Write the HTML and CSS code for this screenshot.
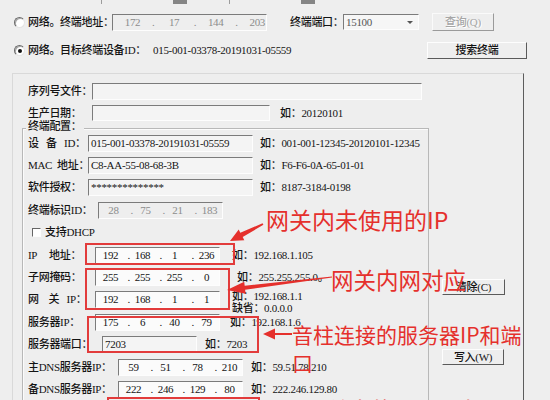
FILE: index.html
```html
<!DOCTYPE html>
<html lang="zh-CN">
<head>
<meta charset="utf-8">
<title>终端配置</title>
<link rel="stylesheet" href="styles.css">
</head>
<body>
<div class="dialog">
  <div class="topstrip">
    <span class="ts ts1"><i class="knob"></i></span>
    <span class="ts ts2"><i class="knob"></i></span>
  </div>

  <div class="row rowA">
    <span class="radio"></span>
    <span class="lbl wA">网络。终端地址：</span>
    <span class="ipb wide dis"><span class="seg">172</span><span class="dot">.</span><span class="seg">17</span><span class="dot">.</span><span class="seg">144</span><span class="dot">.</span><span class="seg">203</span></span>
    <span class="lbl wPort">终端端口：</span>
    <span class="combo"><span class="cv">15100</span><span class="caret"></span></span>
    <span class="btn q">查询(Q)</span>
  </div>

  <div class="row rowB">
    <span class="radio on"></span>
    <span class="lbl wB">网络。目标终端设备ID：</span>
    <span class="val">015-001-03378-20191031-05559</span>
    <span class="btn search">搜索终端</span>
  </div>

  <div class="panel">
    <div class="prow prow1"><span class="lbl w64">序列号文件：</span><span class="tx serial"></span></div>
    <div class="prow prow2"><span class="lbl w64">生产日期：</span><span class="tx date"></span><span class="hint g10">如：20120101</span></div>

    <div class="lower">
      <div class="group">
        <div class="gtitle">终端配置：</div>
        <div class="grows">
          <div class="grow"><span class="lbl w60">设   备   ID：</span><span class="tx idf">015-001-03378-20191031-05559</span><span class="hint g7">如：001-001-12345-20120101-12345</span></div>
          <div class="grow"><span class="lbl w60">MAC  地址：</span><span class="tx idf">C8-AA-55-08-68-3B</span><span class="hint g7">如：F6-F6-0A-65-01-01</span></div>
          <div class="grow"><span class="lbl w60">软件授权：</span><span class="tx idf">**************</span><span class="hint g7">如：8187-3184-0198</span></div>
          <div class="grow"><span class="lbl w70">终端标识ID：</span><span class="ipb dis"><span class="seg">28</span><span class="dot">.</span><span class="seg">75</span><span class="dot">.</span><span class="seg">21</span><span class="dot">.</span><span class="seg">183</span></span></div>
          <div class="grow"><span class="chk"></span><span class="lbl">支持DHCP</span></div>
          <div class="grow"><span class="lbl w67">IP     地址：</span><span class="ipb"><span class="seg">192</span><span class="dot">.</span><span class="seg">168</span><span class="dot">.</span><span class="seg">1</span><span class="dot">.</span><span class="seg">236</span></span><span class="hint g12">如：192.168.1.105</span></div>
          <div class="grow"><span class="lbl w67">子网掩码：</span><span class="ipb"><span class="seg">255</span><span class="dot">.</span><span class="seg">255</span><span class="dot">.</span><span class="seg">255</span><span class="dot">.</span><span class="seg">0</span></span><span class="hint g17">如：255.255.255.0。</span></div>
          <div class="grow"><span class="lbl w67">网    关   IP：</span><span class="ipb"><span class="seg">192</span><span class="dot">.</span><span class="seg">168</span><span class="dot">.</span><span class="seg">1</span><span class="dot">.</span><span class="seg">1</span></span><span class="hint two g12"><span>如：192.168.1.1</span><span>缺省：0.0.0.0</span></span></div>
          <div class="grow"><span class="lbl w67">服务器IP：</span><span class="ipb"><span class="seg">175</span><span class="dot">.</span><span class="seg">6</span><span class="dot">.</span><span class="seg">40</span><span class="dot">.</span><span class="seg">79</span></span><span class="hint g10">如：192.168.1.6</span></div>
          <div class="grow"><span class="lbl w74">服务器端口：</span><span class="tx port">7203</span><span class="hint g8">如：7203</span></div>
          <div class="grow"><span class="lbl w90">主DNS服务器IP：</span><span class="ipb"><span class="seg">59</span><span class="dot">.</span><span class="seg">51</span><span class="dot">.</span><span class="seg">78</span><span class="dot">.</span><span class="seg">210</span></span><span class="hint g8">如：59.51.78.210</span></div>
          <div class="grow"><span class="lbl w90">备DNS服务器IP：</span><span class="ipb"><span class="seg">222</span><span class="dot">.</span><span class="seg">246</span><span class="dot">.</span><span class="seg">129</span><span class="dot">.</span><span class="seg">80</span></span><span class="hint g8">如：222.246.129.80</span></div>
        </div>
      </div>
      <div class="side">
        <span class="btn side1">清除(C)</span>
        <span class="btn side2">写入(W)</span>
      </div>
    </div>
  </div>

  <div class="annot">
    <div class="rbox rb1"></div>
    <div class="rbox rb2"></div>
    <div class="rbox rb3"></div>
    <div class="rbox rb4"></div>
    <svg class="arrows" width="550" height="400" viewBox="0 0 550 400">
      <polygon points="230,241 244.3,240.2 242.7,237.1 263.4,224.7 262.6,223.3 240.3,232.7 238.7,229.6" fill="#e5302c"/>
      <polygon points="227,290 245.6,293.8 245.1,289.8 332.1,277.6 331.9,276.4 244.7,285.8 244.2,281.8" fill="#e5302c"/>
      <polygon points="263,334 275,328.5 275,333 292,333 292,335 275,335 275,339.5" fill="#e5302c"/>
    </svg>
    <div class="atext at1">网关内未使用的IP</div>
    <div class="atext at2">网关内网对应</div>
    <div class="atext at3">音柱连接的服务器IP和端<br>口</div>
    <div class="atext at4">网关内的DNS服务器</div>
  </div>
</div>
</body>
</html>
```

FILE: styles.css
```css
* { box-sizing: border-box; }
html, body { margin: 0; padding: 0; }
body {
  width: 550px;
  height: 400px;
  overflow: hidden;
  background: #eeeeee;
  font-family: "Liberation Serif", "Noto Sans CJK SC", serif;
  font-size: 11px;
  font-weight: 500;
  letter-spacing: -0.3px;
  color: #141414;
}
.dialog { position: relative; width: 550px; height: 400px; }

/* cut-off row at the very top */
.topstrip { display: flex; height: 4px; }
.ts { display: flex; justify-content: flex-end; width: 86px; height: 4px; border-left: 1px solid #9c9c9c; }
.ts1 { margin-left: 101px; }
.ts2 { margin-left: 42px; }
.knob { width: 14px; height: 4px; background: #858585; }

.row { display: flex; align-items: center; white-space: nowrap; }
.rowA { margin-top: 8px; height: 20px; padding-left: 14px; }
.rowB { margin-top: 9px; height: 19px; padding-left: 14px; padding-right: 23px; }

.radio {
  flex: none;
  display: flex; align-items: center; justify-content: center;
  width: 11px; height: 11px;
  margin-right: 3px;
  border-radius: 50%;
  border: 1px solid;
  border-color: #6a6a6a #e4e4e4 #e4e4e4 #6a6a6a;
  background: #fff;
  box-shadow: inset 1px 1px 0 #a8a8a8;
}
.radio.on::after { content: ""; width: 4px; height: 4px; border-radius: 50%; background: #111; }

.lbl { flex: none; white-space: pre; line-height: 13px; }
.wA { width: 84px; }
.wB { width: 125px; }
.wPort { width: 53px; margin-left: 23px; }
.w60 { width: 60px; }
.w64 { width: 64px; }
.w67 { width: 67px; }
.w70 { width: 70px; }
.w74 { width: 74px; }
.w90 { width: 90px; }
.val { line-height: 13px; }

/* sunken text fields */
.tx {
  flex: none;
  display: flex; align-items: center;
  height: 17px;
  padding-left: 2px;
  border: 1px solid;
  border-color: #7b7b7b #fdfdfd #fdfdfd #7b7b7b;
  background: #f4f4f4;
  line-height: 13px;
  white-space: nowrap;
}
.serial { width: 330px; }
.date { width: 178px; height: 16px; }
.idf { width: 165px; }
.port { width: 95px; }

/* IP address controls */
.ipb {
  flex: none;
  display: flex; align-items: center;
  width: 125px; height: 17px;
  padding-left: 2px;
  border: 1px solid;
  border-color: #7b7b7b #fdfdfd #fdfdfd #7b7b7b;
  background: #fbfbfb;
  line-height: 13px;
}
.ipb .seg { flex: none; width: 25px; text-align: center; }
.ipb .dot { flex: none; width: 7px; text-align: right; }
.ipb.wide { width: 155px; padding-left: 11px; }
.ipb.wide .seg { width: 17px; }
.ipb.wide .dot { width: 24.6px; text-align: center; }
.ipb.dis { background: #eeeeee; color: #8c8c8c; }

.combo {
  flex: none;
  display: flex; align-items: center; justify-content: space-between;
  width: 76px; height: 16px;
  padding-left: 2px;
  border: 1px solid;
  border-color: #7b7b7b #fdfdfd #fdfdfd #7b7b7b;
  background: #f6f6f6;
  color: #555;
  line-height: 13px;
}
.caret { width: 0; height: 0; margin-right: 5px; border-top: 3px solid #555; border-left: 3px solid transparent; border-right: 3px solid transparent; }

.btn {
  flex: none;
  display: flex; align-items: center; justify-content: center;
  height: 17px;
  border: 1px solid;
  border-color: #fdfdfd #5a5a5a #5a5a5a #fdfdfd;
  background: #eeeeee;
  line-height: 13px;
  white-space: nowrap;
}
.q { width: 62px; height: 18px; margin-left: 13px; color: #a6a6a6; text-shadow: 1px 1px 0 #ffffff; border-color: #fafafa #9a9a9a #9a9a9a #fafafa; }
.search { width: 100px; margin-left: auto; color: #111; }

.chk {
  flex: none;
  width: 9px; height: 9px;
  margin-left: 4px; margin-right: 4px;
  border: 1px solid;
  border-color: #666 #fdfdfd #fdfdfd #666;
  background: #fff;
}

.hint { flex: none; line-height: 13px; white-space: nowrap; }
.hint.two { display: flex; flex-direction: column; line-height: 12px; margin-top: 4px; }
.g7 { margin-left: 7px; }
.g8 { margin-left: 8px; }
.g10 { margin-left: 10px; }
.g12 { margin-left: 12px; }
.g17 { margin-left: 17px; }

/* lower panel */
.panel {
  margin-top: 13px;
  margin-left: 12px;
  width: 512px;
  height: 340px;
  border-top: 1px solid #d9d9d9;
  border-left: 1px solid #d9d9d9;
  border-right: 1px solid #5c5c5c;
}
.prow { display: flex; align-items: center; padding-left: 15px; white-space: nowrap; }
.prow1 { margin-top: 9px; height: 17px; }
.prow2 { margin-top: 5px; height: 16px; }

.lower { display: flex; margin-top: 7px; }
.group {
  flex: none;
  margin-left: 9px;
  width: 407px;
  height: 300px;
  border: 1px solid #b8b8b8;
  border-bottom: none;
  box-shadow: inset 1px 1px 0 #fbfbfb;
}
.gtitle { width: max-content; margin: -9px 0 0 3px; padding: 0 2px; line-height: 13px; background: #eeeeee; }
.grows { margin-top: -1px; }
.grow { display: flex; align-items: center; height: 22.4px; padding-left: 5px; white-space: nowrap; }

.side { flex: none; display: flex; flex-direction: column; align-items: flex-start; padding-left: 13px; }
.side1 { margin-top: 151px; width: 63px; height: 16px; }
.side2 { margin-top: 54px; width: 62px; height: 16px; }

/* red annotations drawn over the screenshot */
.annot { position: absolute; left: 0; top: 0; width: 550px; height: 400px; overflow: hidden; pointer-events: none; }
.rbox { position: absolute; border: 2px solid #e23b3b; }
.rb1 { left: 85px; top: 243px; width: 150px; height: 22px; }
.rb2 { left: 85px; top: 268px; width: 145px; height: 42px; }
.rb3 { left: 87px; top: 316px; width: 172px; height: 37px; }
.rb4 { left: 107px; top: 397px; width: 153px; height: 30px; }
.arrows { position: absolute; left: 0; top: 0; }
.atext {
  position: absolute;
  font-family: "Noto Sans CJK SC", sans-serif;
  font-weight: 400;
  color: #e5302c;
  white-space: nowrap;
  letter-spacing: 0;
  line-height: 1;
}
.at1 { left: 266px; top: 208px; font-size: 23px; }
.at2 { left: 331px; top: 268px; font-size: 22.5px; }
.at3 { left: 292px; top: 320px; font-size: 21px; line-height: 28px; }
.at4 { left: 305px; top: 397px; font-size: 22px; }
```
